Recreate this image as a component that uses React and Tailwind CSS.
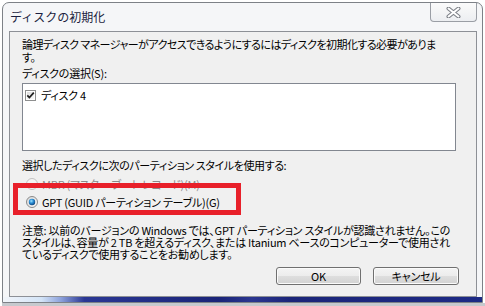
import React from 'react'

const font = "font-['Noto_Sans_CJK_JP','Noto_Sans',sans-serif]"

function CloseGlyph() {
  return (
    <svg width="15" height="11" viewBox="0 0 15 11">
      <path d="M2.5 1.5 L12.5 9.5 M12.5 1.5 L2.5 9.5" stroke="#7b7f86" strokeWidth="4" strokeLinecap="round" />
      <path d="M2.5 1.5 L12.5 9.5 M12.5 1.5 L2.5 9.5" stroke="#ffffff" strokeWidth="2" strokeLinecap="round" />
    </svg>
  )
}

function CheckBox() {
  return (
    <svg width="11" height="11" viewBox="0 0 11 11">
      <defs>
        <linearGradient id="cbg" x1="0" y1="0" x2="1" y2="1">
          <stop offset="0" stopColor="#dcdcdc" />
          <stop offset="1" stopColor="#fbfbfb" />
        </linearGradient>
      </defs>
      <rect x="0.5" y="0.5" width="10" height="10" fill="#fff" stroke="#8e8f8f" />
      <rect x="2" y="2" width="7" height="7" fill="url(#cbg)" />
      <path d="M2.3 5.4 L4.4 7.6 L8.8 2.6" fill="none" stroke="#202020" strokeWidth="1.7" />
    </svg>
  )
}

function Radio({ checked, disabled }) {
  return (
    <svg width="12" height="12" viewBox="0 0 12 12">
      <defs>
        <radialGradient id="rdot" cx="0.4" cy="0.35" r="0.7">
          <stop offset="0" stopColor="#9fe3ff" />
          <stop offset="0.45" stopColor="#2a8fd6" />
          <stop offset="1" stopColor="#0c3f78" />
        </radialGradient>
        <linearGradient id="rbg" x1="0" y1="0" x2="1" y2="1">
          <stop offset="0" stopColor="#d8d8d8" />
          <stop offset="1" stopColor="#fafafa" />
        </linearGradient>
      </defs>
      <circle cx="6" cy="6" r="5.5" fill={disabled ? '#f4f4f4' : 'url(#rbg)'} stroke={disabled ? '#c2c2c2' : '#8a8a8a'} />
      {checked && <circle cx="6" cy="6" r="3.2" fill="url(#rdot)" />}
    </svg>
  )
}

function WinButton({ children }) {
  return (
    <button className="h-[18px] rounded-[3px] border border-[#707070] bg-[linear-gradient(#f4f4f4_0%,#ececec_50%,#dedede_50%,#d2d2d2_100%)] shadow-[inset_0_0_0_1px_#fbfbfb] text-[11px] leading-[16px] text-black">
      {children}
    </button>
  )
}

export default function App() {
  return (
    <div className={`w-[485px] h-[306px] bg-white pt-[2px] pl-[2px] overflow-hidden ${font}`}>
      <div className="w-[481px] h-[301px] flex flex-col rounded-t-[7px] border border-[#7d8187] bg-[#f5f6f8]">
        {/* title bar */}
        <div className="h-[28px] flex items-start justify-between">
          <span className="mt-[6px] ml-[7px] text-[12px] leading-[16px] text-[#1c1f3f]">ディスクの初期化</span>
          <div className="mr-[5px] w-[47px] h-[19px] flex items-center justify-center rounded-b-[4px] border border-t-0 border-[#9a9ea5] bg-[linear-gradient(#fbfbfb,#eceef1)]">
            <CloseGlyph />
          </div>
        </div>

        {/* client area */}
        <div className="w-[468px] h-[266px] ml-[6px] border border-[#8d9096] bg-[#f0f0f0] pt-[6px] pl-[12px] pr-[20px] text-[11px] leading-[13px] tracking-[-0.25px] text-black [font-feature-settings:'palt']">
          <p className="whitespace-nowrap tracking-[-0.55px]">
            論理ディスク マネージャーがアクセスできるようにするにはディスクを初期化する必要がありま
            <br />
            す。
          </p>
          <p className="mt-[3px]">ディスクの選択(S):</p>

          <div className="mt-[3px] w-[434px] h-[68px] border border-[#828790] bg-white">
            <div className="flex items-center gap-[5px] pl-[2px] pt-[5px]">
              <CheckBox />
              <span>ディスク 4</span>
            </div>
          </div>

          <p className="mt-[8px] tracking-[-0.4px]">選択したディスクに次のパーティション スタイルを使用する:</p>

          <div className="relative mt-[3px] pl-[4px]">
            <div className="h-[18px] flex items-center gap-[4px] text-[#8a8a8a]">
              <Radio disabled />
              <span>MBR (マスター ブート レコード)(M)</span>
            </div>
            <div className="h-[18px] flex items-center gap-[4px]">
              <Radio checked />
              <span>GPT (GUID パーティション テーブル)(G)</span>
            </div>
            {/* highlight annotation */}
            <div className="absolute left-[-9px] top-[8px] w-[228px] h-[32px] border-[5px] border-[#e8202a]" />
          </div>

          <p className="mt-[13px] leading-[12px] whitespace-nowrap">
            注意: 以前のバージョンの Windows では、GPT パーティション スタイルが認識されません。この
            <br />
            スタイルは、容量が 2 TB を超えるディスク、または Itanium ベースのコンピューターで使用され
            <br />
            ているディスクで使用することをお勧めします。
          </p>

          <div className="mt-[7px] flex justify-end gap-[12px]">
            <div className="w-[85px] flex flex-col"><WinButton>OK</WinButton></div>
            <div className="w-[86px] flex flex-col mr-[-3px]"><WinButton>キャンセル</WinButton></div>
          </div>
        </div>

        {/* bottom frame glass */}
        <div className="flex-1 bg-[linear-gradient(to_right,#f2f5fa_0%,#d3e4f7_8%,#8ea3dc_12%,#2a3794_17%,#1a2478_45%,#2b3690_52%,#1b2579_60%,#1d2a85_100%)]" />
      </div>
      <div className="h-[3px] bg-[#c6c9ce]" />
    </div>
  )
}
